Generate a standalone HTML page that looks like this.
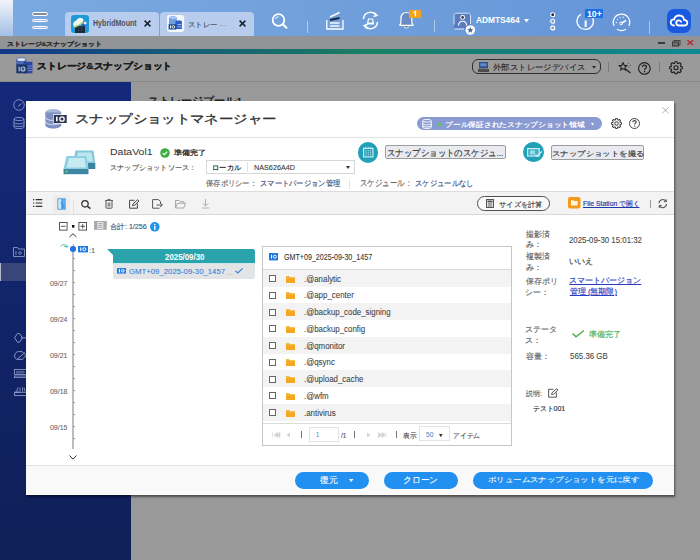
<!DOCTYPE html>
<html><head><meta charset="utf-8">
<style>
*{margin:0;padding:0;box-sizing:border-box}
html,body{width:700px;height:560px;overflow:hidden;background:#999;font-family:"Liberation Sans",sans-serif;color:#333}
.a{position:absolute}
.t{position:absolute;white-space:nowrap;line-height:1;transform-origin:0 0}
svg{position:absolute;overflow:visible}
#topbar{left:0;top:0;width:700px;height:36px;background:linear-gradient(90deg,#7ba9e0,#6a9ad9 72%,#6393d5)}
#leftstrip{left:0;top:0;width:13px;height:36px;background:linear-gradient(#f2f4fa,#a4bfe8)}
#titlebar{left:0;top:36px;width:700px;height:12.5px;background:#929395}
#teal{left:0;top:48.5px;width:700px;height:5.5px;background:linear-gradient(90deg,#12378a 0%,#155c7a 25%,#187468 45%,#188264 53%,#11807c 75%,#0d8a94 100%)}
#apphdr{left:0;top:54px;width:700px;height:28px;background:#9a9a9a}
#sidebar{left:0;top:82px;width:131px;height:478px;background:linear-gradient(#14297a,#0f1f57)}
#content{left:131px;top:82px;width:569px;height:478px;background:#999}
#modal{left:26px;top:101px;width:648px;height:394px;background:#fff;box-shadow:1px 2px 2px rgba(0,0,0,.5)}
.tab{top:12px;height:24px;background:#b8ccee;border-radius:4px 4px 0 0}
.sep{width:1px;background:rgba(255,255,255,.45)}
.hl{height:1px;background:#dedede}
.tbtn{background:#e9ebf0;border:1px solid #9c9c9c;border-radius:2px}
.tc{border-radius:50%;background:#22a0b8}
.row{left:263px;width:248px;height:16.75px}
.cb{width:7px;height:7px;border:1px solid #666;background:#fff}
.btn{top:471.6px;height:17.1px;border-radius:9px;background:#2190f0}
</style></head><body>
<div id="topbar" class="a"></div>
<div id="leftstrip" class="a"></div>
<!-- hamburger -->
<div class="a" style="left:32px;top:12.3px;width:16px;height:3.6px;border-radius:2px;border:1px solid #fff;background:#808a98"></div>
<div class="a" style="left:32px;top:18.9px;width:16px;height:3.6px;border-radius:2px;border:1px solid #fff;background:#a3bce4"></div>
<div class="a" style="left:32px;top:25.5px;width:16px;height:3.6px;border-radius:2px;border:1px solid #fff;background:#a3bce4"></div>
<!-- tabs -->
<div class="a tab" style="left:65px;width:94px"></div>
<div class="a tab" style="left:160px;width:93.5px"></div>
<svg style="left:71px;top:14.5px" width="18" height="18" viewBox="0 0 18 18">
 <rect x="0" y="0" width="18" height="18" rx="3" fill="#1f9ad8"/>
 <rect x="4" y="11" width="10" height="7" fill="#1c2838"/>
 <path d="M5 12.5H13M5 15H13M7.5 11V18M10.5 11V18" stroke="#34465c" stroke-width=".6"/>
 <path d="M11 5 L15.5 8.5 L13.5 12 L10 9.5Z" fill="#2a4fc0"/>
 <path d="M2.5 11.5 C5 11 9 8.5 12 6.5 L11.5 8.8 C9 10.5 6 12 3.5 13Z" fill="#a8e070"/>
 <path d="M2.5 10.5 C1.5 8.5 3 6 5.5 5.5 C6.5 3 9.5 2 11.5 3.5 C13 4.5 12.5 6.5 12 6.8 C9 8.8 5 11 2.5 11.5Z" fill="#f6f9ee"/>
 <circle cx="14" cy="8" r="1.6" fill="#e8f0ff"/>
</svg>
<svg style="left:143.8px;top:20.3px" width="7" height="7" viewBox="0 0 7 7"><path d="M0.6 0.6L6.4 6.4M6.4 0.6L0.6 6.4" stroke="#1b2233" stroke-width="1.5"/></svg>
<svg style="left:166.8px;top:15.2px" width="17.2" height="17" viewBox="0 0 17.2 17">
 <rect x="0" y="0" width="17.2" height="17" rx="3" fill="#f3f7fd"/>
 <path d="M2 3C2 1.8 3.8 1.3 5.9 1.3C8 1.3 9.8 1.8 9.8 3V9.5H2Z" fill="#6f9ee2"/>
 <ellipse cx="5.9" cy="2.8" rx="3.6" ry="1.3" fill="#a9c6f0"/>
 <path d="M8.4 6.5C8.4 5.9 10 5.6 11.6 5.6C13.3 5.6 14.9 5.9 14.9 6.5V14H8.4Z" fill="#2e5cc6"/>
 <path d="M10.5 9.5H14.5M10.5 11.8H14.5" stroke="#cfe0f8" stroke-width=".7"/>
 <rect x="1.6" y="9.2" width="7.6" height="5.3" fill="#164a88"/>
 <rect x="3" y="10.4" width=".9" height="3" fill="#fff"/>
 <circle cx="6.4" cy="11.9" r="1.3" fill="none" stroke="#fff" stroke-width=".9"/>
</svg>
<div class="a" style="left:219.5px;top:25.3px;width:1px;height:1px;background:#8995a8"></div>
<div class="a" style="left:222px;top:25.3px;width:1px;height:1px;background:#8995a8"></div>
<div class="a" style="left:224.5px;top:25.3px;width:1px;height:1px;background:#8995a8"></div>
<svg style="left:238.9px;top:20.3px" width="7" height="7" viewBox="0 0 7 7"><path d="M0.6 0.6L6.4 6.4M6.4 0.6L0.6 6.4" stroke="#1b2233" stroke-width="1.5"/></svg>
<!-- search -->
<svg style="left:271px;top:13px" width="18" height="16" viewBox="0 0 18 16">
 <circle cx="7.5" cy="7" r="5.8" fill="none" stroke="#fff" stroke-width="1.8"/>
 <path d="M4.5 6 A3.2 3.2 0 0 1 7.5 3.8" fill="none" stroke="#fff" stroke-width="1"/>
 <path d="M12 11.5 L15.5 14.8" stroke="#fff" stroke-width="2" stroke-linecap="round"/>
</svg>
<div class="a sep" style="left:307px;top:20.6px;height:12.8px"></div>
<!-- storage stack -->
<svg style="left:326px;top:11px" width="18" height="19" viewBox="0 0 18 19">
 <path d="M0.8 9 V18 H17 V9" fill="none" stroke="#fff" stroke-width="1.3"/>
 <path d="M4 6 L13.5 1.5" stroke="#fff" stroke-width="1.4"/>
 <path d="M4 9 L13.5 7" stroke="#1a2740" stroke-width="2.2"/>
 <path d="M4 12 H13.5" stroke="#fff" stroke-width="1.4"/>
 <path d="M4 15 H13.5" stroke="#fff" stroke-width="1.4"/>
</svg>
<!-- sync -->
<svg style="left:361px;top:10.5px" width="19" height="19" viewBox="0 0 19 19">
 <path d="M2.5 8 A7 7 0 0 1 15 4" fill="none" stroke="#fff" stroke-width="1.5"/>
 <path d="M16.5 11 A7 7 0 0 1 4 15" fill="none" stroke="#fff" stroke-width="1.5"/>
 <path d="M13 1.5 L16 4.5 L12.5 5.5" fill="none" stroke="#fff" stroke-width="1.4"/>
 <path d="M6 17.5 L3 14.5 L6.5 13.5" fill="none" stroke="#fff" stroke-width="1.4"/>
 <path d="M6.5 12.5 L7.5 8 H11.5 L12.5 12.5 Z" fill="none" stroke="#fff" stroke-width="1.2"/>
 <rect x="6" y="11.5" width="7" height="2" fill="#fff"/>
</svg>
<!-- bell -->
<svg style="left:399px;top:12px" width="16" height="18" viewBox="0 0 16 18">
 <path d="M.7 13.3C1.7 12.4 2 11.5 2 9V6.2C2 2.7 4.3 .5 7.4 .5C10.5 .5 12.8 2.7 12.8 6.2V9C12.8 11.5 13.1 12.4 14.1 13.3Z" fill="#6a8cc4" stroke="#fff" stroke-width="1.2" stroke-linejoin="round"/>
 <path d="M5 14.4A2.4 2.1 0 0 0 9.8 14.4Z" fill="#fff"/>
 <rect x="6.2" y="14.4" width="2.4" height="1" fill="#2a3548"/>
</svg>
<div class="a" style="left:409.3px;top:9.9px;width:11.5px;height:8.2px;background:#f5a31c;border-radius:1px"></div>
<svg style="left:413px;top:11.3px" width="4" height="6" viewBox="0 0 4 6"><path d="M.6 1.6L2.4 .4V5.6" fill="none" stroke="#fff" stroke-width="1.3"/></svg>
<div class="a sep" style="left:434px;top:20.4px;height:11.6px"></div>
<!-- user -->
<svg style="left:452.5px;top:11.5px" width="23" height="23" viewBox="0 0 23 23">
 <rect x="1" y="1.3" width="16.5" height="15.5" fill="#5a7dbf"/>
 <path d="M1 12.5V3.2C1 2 1.8 1.2 3 1.2H15.5C16.7 1.2 17.5 2 17.5 3.2V12" fill="none" stroke="#d3e2f7" stroke-width="1"/>
 <path d="M1.5 17H11" stroke="#d3e2f7" stroke-width="1.1"/>
 <circle cx="9.6" cy="5.4" r="1.9" fill="#2a3550" stroke="#fff" stroke-width="1.1"/>
 <path d="M5.6 13.5C5.6 10.5 7.3 9.2 9.6 9.2C11.9 9.2 13.6 10.5 13.6 13.5" fill="none" stroke="#fff" stroke-width="1.1"/>
 <circle cx="17.3" cy="18" r="4.8" fill="#fff"/>
 <path d="M17.3 14.9L18.2 17.1L20.5 17.2L18.7 18.6L19.3 20.9L17.3 19.6L15.3 20.9L15.9 18.6L14.1 17.2L16.4 17.1Z" fill="#4a6a9a"/>
</svg>
<svg style="left:523.5px;top:19px" width="5" height="3.5" viewBox="0 0 5 3.5"><path d="M0 0H5L2.5 3.5Z" fill="#fff"/></svg>
<!-- dots -->
<svg style="left:549.5px;top:11.5px" width="6" height="19" viewBox="0 0 6 19">
 <circle cx="2.7" cy="2.8" r="2" fill="#1b2740" stroke="#fff" stroke-width="1.1"/>
 <circle cx="2.7" cy="9.2" r="2" fill="#7aa0d8" stroke="#fff" stroke-width="1.1"/>
 <circle cx="2.7" cy="15.9" r="2" fill="#7aa0d8" stroke="#fff" stroke-width="1.1"/>
</svg>
<!-- info -->
<svg style="left:575.5px;top:11.5px" width="19" height="19" viewBox="0 0 19 19">
 <path d="M13 2 A8.2 8.2 0 1 1 5 2.2" fill="none" stroke="#fff" stroke-width="1.3"/>
 <rect x="8.7" y="8.5" width="1.9" height="6.5" fill="#fff"/>
</svg>
<div class="a" style="left:585.4px;top:9.3px;width:17.5px;height:8.6px;background:#1a70e6"></div>
<!-- gauge -->
<svg style="left:611.5px;top:12.5px" width="19" height="18" viewBox="0 0 19 18">
 <path d="M2.2 13 A8.2 8.2 0 1 1 16.8 13" fill="none" stroke="#fff" stroke-width="1.2"/>
 <path d="M5 16.3 A9 9 0 0 0 14 16.3" fill="none" stroke="#fff" stroke-width="1.2"/>
 <path d="M9.5 10.2 L14 7.5" stroke="#fff" stroke-width="1.5"/>
 <circle cx="9.2" cy="10.4" r="1.4" fill="none" stroke="#fff" stroke-width="1"/>
 <circle cx="4.3" cy="9.5" r=".65" fill="#fff"/><circle cx="5.5" cy="6.3" r=".65" fill="#fff"/><circle cx="8" cy="4.3" r=".65" fill="#fff"/><circle cx="11.2" cy="4.2" r=".65" fill="#fff"/>
</svg>
<div class="a sep" style="left:648.6px;top:20.7px;height:13.6px"></div>
<!-- cloud app -->
<svg style="left:667px;top:9px" width="24" height="24" viewBox="0 0 24 24">
 <rect x="0" y="0" width="24" height="24" rx="7" fill="#1959df"/>
 <path d="M7 16.5 C4.5 16.5 3.5 14.5 3.8 12.8 C4.2 11 5.8 10.2 7.2 10.4 C7.8 7.8 10 6.3 12.5 6.5 C15 6.7 16.8 8.5 17 10.8 C19 10.8 20.5 12.3 20.3 14 C20.2 15.5 19 16.5 17.5 16.5 H12 C10.3 16.5 9.2 15.2 9.2 13.8 C9.2 12.4 10.3 11.3 11.8 11.3 C13 11.3 13.8 12 14.2 12.8" fill="none" stroke="#fff" stroke-width="1.8" stroke-linecap="round"/>
</svg>

<div id="titlebar" class="a"></div>
<!-- window controls -->
<div class="a" style="left:658px;top:42px;width:7px;height:1.6px;background:#3a3a3a"></div>
<svg style="left:672px;top:39.5px" width="8.5" height="6.5" viewBox="0 0 8.5 6.5"><rect x="2" y=".5" width="6" height="4.5" fill="none" stroke="#444" stroke-width="1"/><rect x=".5" y="2" width="6" height="4" fill="#6e6e6e" stroke="#3a3a3a" stroke-width="1"/></svg>
<svg style="left:687.4px;top:40.4px" width="6.4" height="5.4" viewBox="0 0 6.4 5.4"><path d="M.4 .3L6 5.1M6 .3L.4 5.1" stroke="#b8282a" stroke-width="1.3"/></svg>
<div id="teal" class="a"></div>
<div id="apphdr" class="a"></div>
<!-- app header icon -->
<svg style="left:16.4px;top:57.2px" width="17" height="17" viewBox="0 0 17 17">
 <path d="M.3 2.5C.3 1 2.5 .2 5.3 .2C8.1 .2 10.3 1 10.3 2.5V8H.3Z" fill="#3352a8"/>
 <ellipse cx="5.3" cy="2.4" rx="4.6" ry="1.9" fill="#9fb0dc"/>
 <ellipse cx="5.3" cy="2.8" rx="3.4" ry="1.2" fill="#dfe6f5"/>
 <path d="M.3 5.3C2 6.3 8 6.3 10.3 5.3" fill="none" stroke="#8ea2d6" stroke-width=".6"/>
 <path d="M7.5 4.8H16.4V16.3H7.5Z" fill="#2c45a0"/>
 <path d="M11 9H16M11 11.3H16M11 13.6H16" stroke="#8da0d8" stroke-width=".7"/>
 <rect x=".3" y="7.5" width="11" height="8.8" fill="#1c3767"/>
 <rect x="2.6" y="9.6" width="1.1" height="4.8" fill="#b9c6e2"/>
 <circle cx="7" cy="12" r="2" fill="none" stroke="#b9c6e2" stroke-width="1.1"/>
 <circle cx="7" cy="12" r=".6" fill="#b9c6e2"/>
</svg>
<!-- app header right -->
<div class="a" style="left:471.5px;top:59.1px;width:129.9px;height:15.1px;border:1px solid #2e2e2e;border-radius:6px"></div>
<svg style="left:477.9px;top:61.7px" width="11" height="10" viewBox="0 0 11 10">
 <rect x="1" y="0" width="9" height="6" fill="#2f4f8a"/>
 <rect x="2.3" y="1.3" width="6.4" height="3" fill="#5f86c8"/>
 <path d="M0 7H11V10H0Z" fill="#4a4a4a"/>
 <rect x="1" y="6" width="9" height="1.2" fill="#7a7a7a"/>
</svg>
<svg style="left:592.3px;top:66px" width="4" height="2.6" viewBox="0 0 4 2.6"><path d="M0 0H4L2 2.6Z" fill="#222"/></svg>
<div class="a" style="left:608.3px;top:61.7px;width:1px;height:10.3px;background:#7a7a7a"></div>
<svg style="left:618.6px;top:61.7px" width="13" height="11.5" viewBox="0 0 13 11.5">
 <path d="M4 .8L5.2 3.3L7.8 3.6L5.9 5.3L6.4 7.9L4 6.6L1.7 7.9L2.2 5.3L.3 3.6L2.9 3.3Z" fill="none" stroke="#1e1e1e" stroke-width="1.1"/>
 <path d="M6.5 7L11.5 11" stroke="#1e1e1e" stroke-width="1.3"/>
 <path d="M9 1.5H10M10.8 3.5H11.8M9.5 5.2H10.3" stroke="#444" stroke-width=".8"/>
</svg>
<svg style="left:637.5px;top:61.5px" width="13" height="13" viewBox="0 0 13 13">
 <circle cx="6.4" cy="6.4" r="5.8" fill="none" stroke="#1e1e1e" stroke-width="1.1"/>
 <path d="M4.4 5C4.4 3.8 5.3 3.1 6.4 3.1C7.6 3.1 8.4 3.8 8.4 4.9C8.4 6.2 6.6 6.4 6.6 7.9" fill="none" stroke="#1e1e1e" stroke-width="1.2"/>
 <circle cx="6.6" cy="9.6" r=".8" fill="#1e1e1e"/>
</svg>
<div class="a" style="left:659.2px;top:61.7px;width:1px;height:10.3px;background:#7a7a7a"></div>
<svg style="left:669.2px;top:60.9px" width="14" height="13.5" viewBox="0 0 11 11" preserveAspectRatio="none">
 <path d="M9.13 4.38 L10.43 4.68 L10.43 6.32 L9.13 6.62 L8.86 7.28 L9.57 8.41 L8.41 9.57 L7.28 8.86 L6.62 9.13 L6.32 10.43 L4.68 10.43 L4.38 9.13 L3.72 8.86 L2.59 9.57 L1.43 8.41 L2.14 7.28 L1.87 6.62 L0.57 6.32 L0.57 4.68 L1.87 4.38 L2.14 3.72 L1.43 2.59 L2.59 1.43 L3.72 2.14 L4.38 1.87 L4.68 0.57 L6.32 0.57 L6.62 1.87 L7.28 2.14 L8.41 1.43 L9.57 2.59 L8.86 3.72Z" stroke-linejoin="round" fill="none" stroke="#1e1e1e" stroke-width=".9"/>
 <circle cx="5.5" cy="5.5" r="1.6" fill="none" stroke="#1e1e1e" stroke-width=".9"/>
</svg>
<div class="a" style="left:0;top:81.2px;width:700px;height:1px;background:#8a8a8a"></div>
<div id="sidebar" class="a"></div>
<!-- sidebar icons -->
<svg style="left:12.5px;top:98.5px" width="12" height="12" viewBox="0 0 12 12">
 <circle cx="6" cy="6" r="5.3" fill="none" stroke="#8a96c6" stroke-width=".9"/>
 <path d="M5 7.5L8.5 4.5" stroke="#8a96c6" stroke-width="1"/>
</svg>
<svg style="left:12.5px;top:116.5px" width="12" height="12" viewBox="0 0 12 12">
 <ellipse cx="6" cy="2" rx="5" ry="1.6" fill="none" stroke="#8a96c6" stroke-width=".9"/>
 <path d="M1 2V10C1 11 3 11.6 6 11.6C9 11.6 11 11 11 10V2M1 5.3C1 6.3 3 6.9 6 6.9C9 6.9 11 6.3 11 5.3M1 8C1 9 3 9.6 6 9.6C9 9.6 11 9 11 8" fill="none" stroke="#8a96c6" stroke-width=".9"/>
</svg>
<svg style="left:12.5px;top:246.5px" width="12" height="10" viewBox="0 0 12 10">
 <path d="M.5 9.5V.5H4.5L5.5 2H11.5V9.5Z" fill="none" stroke="#8a96c6" stroke-width=".9"/>
 <rect x="2.5" y="4" width=".9" height="4" fill="#8a96c6"/><circle cx="7" cy="6" r="1.3" fill="none" stroke="#8a96c6" stroke-width=".8"/>
</svg>
<div class="a" style="left:0;top:262.9px;width:131px;height:17.7px;background:#3a4579"></div>
<div class="a" style="left:0;top:262.9px;width:1.2px;height:17.7px;background:#b4b9d2"></div>
<svg style="left:13.8px;top:333.1px" width="13" height="10" viewBox="0 0 13 10">
 <path d="M5.5 .5H3.5L.6 4.8L3.5 9.2H5.5" fill="none" stroke="#8a96c6" stroke-width="1"/>
 <path d="M5.5 .5L8.5 4.8L5.5 9.2M7 4.8H13" fill="none" stroke="#8a96c6" stroke-width="1"/>
</svg>
<svg style="left:13.8px;top:351px" width="13" height="9" viewBox="0 0 13 9">
 <path d="M8 .6H4.5C2 .6 .6 3 .6 5C.6 7 2 8.4 3.5 8.4H8.5L12 4.5Z" fill="none" stroke="#8a96c6" stroke-width="1"/>
 <path d="M3 8.4L11 1.5" stroke="#8a96c6" stroke-width="1"/>
</svg>
<svg style="left:13.8px;top:368.9px" width="13" height="9" viewBox="0 0 13 9">
 <rect x=".5" y=".5" width="12" height="5" fill="none" stroke="#8a96c6" stroke-width=".9"/>
 <path d="M2.5 2.3H4.5V3.2H2.5V4.1H4.5M5.5 2.3H7.5V3.2H5.5V4.1H7.5M8.5 2.3V4.1H10C10.5 4.1 10.5 2.3 10 2.3Z" fill="none" stroke="#8a96c6" stroke-width=".6"/>
 <rect x=".5" y="7" width="12" height="1.6" fill="none" stroke="#8a96c6" stroke-width=".8"/>
</svg>
<svg style="left:13.8px;top:386.5px" width="13" height="9" viewBox="0 0 13 9">
 <path d="M2.5 4.5L4 .5M6 .5V4.5M8.5 .5V4.5M11 4.5L10 .5" fill="none" stroke="#8a96c6" stroke-width=".9"/>
 <rect x=".5" y="5.3" width="12" height="3.2" fill="none" stroke="#8a96c6" stroke-width=".9"/>
 <path d="M.5 5.3H5.5" stroke="#8a96c6" stroke-width="1.4"/>
</svg>
<div id="content" class="a"></div>
<div class="t" style="left:147.65px;top:96.10px;font-size:9.76px;font-weight:700;color:#202020;transform:scaleX(1.103);">ストレージプール1</div>
<div id="modal" class="a"></div>

<!-- ======= MODAL ======= -->
<!-- header icon -->
<svg style="left:45px;top:109px" width="23" height="20" viewBox="0 0 23 20">
 <ellipse cx="8.3" cy="3.5" rx="8" ry="3.5" fill="#a9b7d8"/>
 <path d="M.3 3.5V16C.3 18 4 19.6 8.3 19.6C12.6 19.6 16.3 18 16.3 16V3.5" fill="#7f8fbf"/>
 <path d="M.3 8C.3 10 4 11.4 8.3 11.4C12.6 11.4 16.3 10 16.3 8M.3 12.3C.3 14.3 4 15.7 8.3 15.7C12.6 15.7 16.3 14.3 16.3 12.3" fill="none" stroke="#c9d2ea" stroke-width="1.1"/>
 <rect x="8" y="5.3" width="14.5" height="9.3" fill="#fff"/>
 <rect x="8.7" y="6" width="13" height="8" fill="#2a3550"/>
 <rect x="11" y="7.7" width="1.6" height="4.6" fill="#fff"/>
 <circle cx="17" cy="10" r="2.2" fill="none" stroke="#fff" stroke-width="1.3"/>
</svg>
<!-- pill -->
<div class="a" style="left:416.8px;top:116.8px;width:185.5px;height:13.7px;border-radius:7px;background:#8a9ad2"></div>
<svg style="left:422px;top:118.8px" width="10" height="10" viewBox="0 0 10 10">
 <ellipse cx="5" cy="1.8" rx="4.3" ry="1.4" fill="none" stroke="#fff" stroke-width=".9"/>
 <path d="M.7 1.8V8.2C.7 9 2.7 9.6 5 9.6C7.3 9.6 9.3 9 9.3 8.2V1.8M.7 4.5C.7 5.3 2.7 5.9 5 5.9C7.3 5.9 9.3 5.3 9.3 4.5M.7 6.7C.7 7.5 2.7 8 5 8C7.3 8 9.3 7.5 9.3 6.7" fill="none" stroke="#fff" stroke-width=".9"/>
</svg>
<div class="a" style="left:437.3px;top:122.5px;width:3.6px;height:3.6px;border-radius:50%;background:#58c858"></div>
<svg style="left:591.3px;top:122.7px" width="3" height="2.6" viewBox="0 0 3 2.6"><path d="M0 0H3L1.5 2.6Z" fill="#fff"/></svg>
<!-- gear -->
<svg style="left:611px;top:117.8px" width="11" height="11" viewBox="0 0 11 11">
 <path d="M9.13 4.38 L10.43 4.68 L10.43 6.32 L9.13 6.62 L8.86 7.28 L9.57 8.41 L8.41 9.57 L7.28 8.86 L6.62 9.13 L6.32 10.43 L4.68 10.43 L4.38 9.13 L3.72 8.86 L2.59 9.57 L1.43 8.41 L2.14 7.28 L1.87 6.62 L0.57 6.32 L0.57 4.68 L1.87 4.38 L2.14 3.72 L1.43 2.59 L2.59 1.43 L3.72 2.14 L4.38 1.87 L4.68 0.57 L6.32 0.57 L6.62 1.87 L7.28 2.14 L8.41 1.43 L9.57 2.59 L8.86 3.72Z" stroke-linejoin="round" fill="none" stroke="#444" stroke-width="1.05"/>
 <circle cx="5.5" cy="5.5" r="1.7" fill="none" stroke="#444" stroke-width="1.05"/>
</svg>
<svg style="left:629px;top:117.8px" width="11" height="11" viewBox="0 0 11 11">
 <circle cx="5.5" cy="5.5" r="5" fill="none" stroke="#444" stroke-width="1"/>
 <path d="M3.8 4.2C3.8 3.2 4.6 2.6 5.5 2.6C6.5 2.6 7.2 3.2 7.2 4.1C7.2 5.2 5.6 5.4 5.6 6.6" fill="none" stroke="#444" stroke-width="1.1"/>
 <circle cx="5.6" cy="8.1" r=".7" fill="#444"/>
</svg>
<svg style="left:661.6px;top:107.3px" width="7" height="6.5" viewBox="0 0 7 6.5"><path d="M.3 .3L6.7 6.2M6.7 .3L.3 6.2" stroke="#9a9a9a" stroke-width=".8"/></svg>
<div class="a hl" style="left:26px;top:136.8px;width:648px;background:#e3e3e3"></div>
<!-- volume icon -->
<svg style="left:62.5px;top:150px" width="33" height="25" viewBox="0 0 33 25">
 <path d="M12.5 .5H30.5L32.3 13H9.8Z" fill="#84c8da"/>
 <path d="M15 2.5H28.5L30 11.5H12.5Z" fill="#bde5ee"/>
 <rect x="25" y="13" width="7.3" height="6" fill="#3a84a0"/>
 <path d="M3.5 6H23.5L25.5 19H.5Z" fill="#8ccfe0"/>
 <path d="M6 8H21.5L23 17.5H3.5Z" fill="#c6ebf2"/>
 <rect x=".5" y="19" width="25" height="5.2" fill="#3f86a2"/>
 <circle cx="3.6" cy="21.6" r="1" fill="#8fd860"/>
</svg>
<!-- green check -->
<svg style="left:159.7px;top:147.5px" width="10" height="10" viewBox="0 0 10 10">
 <circle cx="5" cy="5" r="4.8" fill="#3fae49"/>
 <path d="M2.7 5.1L4.3 6.6L7.3 3.6" fill="none" stroke="#fff" stroke-width="1.2"/>
</svg>
<!-- select -->
<div class="a" style="left:205.7px;top:159.6px;width:149.3px;height:14.6px;border:1px solid #d6d6d6;background:#fff"></div>
<div class="a" style="left:247px;top:162.4px;width:1px;height:9.6px;background:#e2e2e2"></div>
<svg style="left:346px;top:165.8px" width="4" height="3" viewBox="0 0 4 3"><path d="M0 0H4L2 3Z" fill="#333"/></svg>
<div class="a" style="left:349.3px;top:180px;width:1px;height:9px;background:#e2e2e2"></div>
<!-- teal circles -->
<div class="a tc" style="left:357.5px;top:142px;width:20.5px;height:20.5px"></div>
<svg style="left:362.8px;top:146.8px" width="10.5" height="10.5" viewBox="0 0 10.5 10.5">
 <rect x=".6" y="1.3" width="9.3" height="8.6" fill="none" stroke="#d8f4f8" stroke-width="1.1"/>
 <path d="M2.6 .2V1.8M5.25 .2V1.8M7.9 .2V1.8" stroke="#d8f4f8" stroke-width=".9"/>
 <path d="M2.5 3.8H3.5M4.75 3.8H5.75M7 3.8H8M2.5 5.8H3.5M4.75 5.8H5.75M7 5.8H8M2.5 7.8H3.5M4.75 7.8H5.75M7 7.8H8" stroke="#d8f4f8" stroke-width="1"/>
</svg>
<div class="a tbtn" style="left:385.2px;top:144.6px;width:120.6px;height:14.7px"></div>
<div class="a tc" style="left:523.2px;top:141.8px;width:20.6px;height:20.6px"></div>
<svg style="left:527px;top:147.8px" width="16" height="9" viewBox="0 0 16 9">
 <rect x=".6" y=".6" width="11.6" height="7.4" fill="#3fb3c8" stroke="#d8f4f8" stroke-width="1.1"/>
 <rect x="3" y="2.5" width="5" height="3.8" fill="#9adbe6"/>
 <path d="M8.5 6.5L10.3 8.2L15 3.3" fill="none" stroke="#d8f4f8" stroke-width="1.1"/>
</svg>
<div class="a tbtn" style="left:551px;top:144.5px;width:93.3px;height:15px"></div>
<div class="a hl" style="left:26px;top:190.8px;width:648px;background:#dcdcdc"></div>
<!-- toolbar -->
<div class="a" style="left:26px;top:191.8px;width:648px;height:22px;background:#f3f3f3"></div>
<div class="a hl" style="left:26px;top:213.7px;width:648px;background:#d9d9d9"></div>
<svg style="left:32.9px;top:199.4px" width="9.5" height="8" viewBox="0 0 9.5 8">
 <path d="M0 .7H1.3M0 4H1.3M0 7.3H1.3M2.7 .7H9.3M2.7 4H9.3M2.7 7.3H9.3" stroke="#333" stroke-width="1.2"/>
</svg>
<div class="a" style="left:53px;top:195px;width:17px;height:17.6px;background:#efece9"></div>
<svg style="left:57px;top:198px" width="9" height="12" viewBox="0 0 9 12">
 <rect x=".3" y=".3" width="8.4" height="11.4" fill="#4aa0ea"/>
 <rect x="1.2" y="1.2" width="3.6" height="9.6" fill="#c6eafb"/>
 <rect x="5.3" y="1.2" width="2.6" height="9.6" fill="#5fb4f2"/>
 <path d="M4.9 1V11M3.3 5H4.9M4.9 6.8H7.5M4.9 8.8H7.5" stroke="#2f78c8" stroke-width=".7"/>
</svg>
<div class="a" style="left:73.4px;top:200px;width:1px;height:14px;background:#e2e2e2"></div>
<svg style="left:80.9px;top:200px" width="11" height="9" viewBox="0 0 11 9">
 <circle cx="4" cy="3.8" r="3.2" fill="none" stroke="#333" stroke-width="1.3"/>
 <path d="M6.3 6.1L9.4 8.6" stroke="#333" stroke-width="1.5"/>
</svg>
<svg style="left:105.4px;top:199px" width="8" height="9.5" viewBox="0 0 8 9.5">
 <path d="M0 1.5H8M2.8 1.5V.4H5.2V1.5" fill="none" stroke="#555" stroke-width=".9"/>
 <path d="M1 2V8.6C1 9 1.3 9.2 1.6 9.2H6.4C6.7 9.2 7 9 7 8.6V2" fill="none" stroke="#555" stroke-width="1"/>
 <path d="M3.2 3.5V7.6M4.8 3.5V7.6" stroke="#555" stroke-width=".9"/>
</svg>
<svg style="left:128.6px;top:199px" width="10.5" height="9.8" viewBox="0 0 10.5 9.8">
 <path d="M5.5 1.3H.6V9.2H8.4V4.5" fill="none" stroke="#444" stroke-width="1"/>
 <path d="M3.5 6.5L4 4.8L8.7.7L10 2L5.7 6.2Z" fill="none" stroke="#444" stroke-width="1"/>
</svg>
<svg style="left:151.7px;top:199px" width="11.5" height="9.8" viewBox="0 0 11.5 9.8">
 <path d="M6.5 .6H.6V9.2H7.5M6.5 .6L8.5 2.6V4" fill="none" stroke="#555" stroke-width="1"/>
 <path d="M4.5 6H10M8 4L10.5 6L8 8" fill="none" stroke="#555" stroke-width="1"/>
</svg>
<svg style="left:175.2px;top:199.5px" width="11" height="8.5" viewBox="0 0 11 8.5">
 <path d="M.5 8V.5H4L5 1.7H9V3M.5 8L2.3 3.3H10.5L8.7 8Z" fill="none" stroke="#a8a8a8" stroke-width="1"/>
</svg>
<svg style="left:201.5px;top:199px" width="7" height="9.5" viewBox="0 0 7 9.5">
 <path d="M3.5 0V7M.8 4.3L3.5 7L6.2 4.3M0 9H7" fill="none" stroke="#b0b0b0" stroke-width="1"/>
</svg>
<!-- pill size btn -->
<div class="a" style="left:477.1px;top:196.2px;width:72.6px;height:15px;border:1px solid #505050;border-radius:8px;background:#fafafa"></div>
<svg style="left:486px;top:199.3px" width="8" height="9" viewBox="0 0 8 9">
 <rect x=".5" y=".5" width="7" height="8" fill="none" stroke="#555" stroke-width="1"/>
 <rect x="1.5" y="1.5" width="5" height="2" fill="#555"/>
 <path d="M1.5 5H6.5M1.5 7H6.5M3 4V8M5 4V8" stroke="#555" stroke-width=".6"/>
</svg>
<svg style="left:567.7px;top:196.9px" width="12.5" height="11.6" viewBox="0 0 12.5 11.6">
 <rect x="0" y="0" width="12.5" height="11.6" rx="2" fill="#f29a1c"/>
 <path d="M3 3.2H5.5L6.3 4H9.5V8.6H3Z" fill="#fff4d8"/>
</svg>
<div class="a" style="left:649.5px;top:200.3px;width:1px;height:7.7px;background:#999"></div>
<svg style="left:657.8px;top:199.4px" width="9.5" height="9.2" viewBox="0 0 9.5 9.2">
 <path d="M1 4.2A3.8 3.8 0 0 1 8 2.3M8.5 5A3.8 3.8 0 0 1 1.5 6.9" fill="none" stroke="#555" stroke-width="1.1"/>
 <path d="M8.3 .3V2.7H5.9M1.2 8.9V6.5H3.6" fill="none" stroke="#555" stroke-width="1"/>
</svg>
<!-- timeline controls -->
<svg style="left:59px;top:222px" width="29" height="9" viewBox="0 0 29 9">
 <rect x=".5" y=".5" width="7.6" height="7.6" fill="#fff" stroke="#444" stroke-width=".9"/>
 <path d="M2 4.3H6.6" stroke="#444" stroke-width=".9"/>
 <rect x="13" y="3" width="2.4" height="2.6" fill="#111"/>
 <rect x="19.9" y=".5" width="7.6" height="7.6" fill="#fff" stroke="#444" stroke-width=".9"/>
 <path d="M21.4 4.3H26M23.7 2V6.6" stroke="#444" stroke-width=".9"/>
</svg>
<svg style="left:94.1px;top:221.2px" width="12.8" height="8.8" viewBox="0 0 12.8 8.8">
 <rect x="0" y="0" width="12.8" height="8.8" fill="#ababab"/>
 <rect x="4" y="1.5" width="4.8" height="6" fill="none" stroke="#f0f0f0" stroke-width=".9"/>
 <path d="M4 3.5H8.8M4 5.5H8.8" stroke="#f0f0f0" stroke-width=".7"/>
</svg>
<svg style="left:149.5px;top:221.8px" width="9.6" height="9.6" viewBox="0 0 9.6 9.6">
 <circle cx="4.8" cy="4.8" r="4.8" fill="#1f95ea"/>
 <rect x="4.1" y="4" width="1.4" height="3.8" fill="#fff"/><circle cx="4.8" cy="2.6" r=".8" fill="#fff"/>
</svg>
<svg style="left:69px;top:233px" width="8" height="4.5" viewBox="0 0 8 4.5"><path d="M.5 4L4 .7L7.5 4" fill="none" stroke="#333" stroke-width="1"/></svg>
<svg style="left:59.7px;top:244px" width="8" height="5" viewBox="0 0 8 5">
 <path d="M1 2.5C1 1 2.5 .5 4 .8C5.5 .5 7 1.3 7 2.5M4 2.5H8M6.3 1L7.8 2.5L6.3 4" fill="none" stroke="#62c6b4" stroke-width="1"/>
</svg>
<div class="a" style="left:72.3px;top:251px;width:1.4px;height:197.8px;background:#bcbcbc"></div>
<div class="a" style="left:72.5px;top:244px;width:.8px;height:2.5px;background:#8fb0e8"></div>
<div class="a" style="left:70.1px;top:246.3px;width:5.5px;height:5.5px;border-radius:50%;background:#2571e0"></div>
<svg style="left:72px;top:258px" width="4" height="184" viewBox="0 0 4 184">
 <path d="M1 .5H3M1 12.5H3M1 24.5H3M1 36.5H3M1 48.5H3M1 60.5H3M1 72.5H3M1 84.5H3M1 96.5H3M1 108.5H3M1 120.5H3M1 132.5H3M1 144.5H3M1 156.5H3M1 168.5H3M1 180.5H3" stroke="#9a9a9a" stroke-width="1"/>
</svg>
<svg style="left:78px;top:245.7px" width="10" height="6.4" viewBox="0 0 10 6.4">
 <rect x="0" y="0" width="10" height="6.4" fill="#1e7be0"/>
 <rect x="2.2" y="1.4" width="1.1" height="3.6" fill="#fff"/><circle cx="6.3" cy="3.2" r="1.5" fill="none" stroke="#fff" stroke-width="1"/>
</svg>
<svg style="left:69px;top:454.7px" width="8" height="4.8" viewBox="0 0 8 4.8"><path d="M.5 .5L4 4.2L7.5 .5" fill="none" stroke="#333" stroke-width="1"/></svg>
<!-- snapshot card -->
<svg style="left:107.3px;top:249.2px" width="148" height="14.3" viewBox="0 0 148 14.3">
 <path d="M0 0H146C147 0 148 1 148 2V14.3H6V6Z" fill="#2ba3ad"/>
</svg>
<div class="a" style="left:113.3px;top:263.5px;width:142px;height:15.8px;background:#e3e4e6;border-radius:0 0 2px 2px"></div>
<svg style="left:117px;top:268.4px" width="9" height="5.6" viewBox="0 0 9 5.6">
 <rect x="0" y="0" width="9" height="5.6" fill="#2a7fe0"/>
 <rect x="2" y="1.2" width="1" height="3.2" fill="#fff"/><circle cx="5.8" cy="2.8" r="1.3" fill="none" stroke="#fff" stroke-width=".9"/>
</svg>
<svg style="left:235px;top:268.4px" width="8" height="5.5" viewBox="0 0 8 5.5"><path d="M.4 2.8L2.8 5L7.6 .4" fill="none" stroke="#3b7dd8" stroke-width="1.1"/></svg>
<!-- file panel -->
<div class="a" style="left:262px;top:245.6px;width:250px;height:200.8px;border:1px solid #c6c6c6;background:#fff"></div>
<svg style="left:268.6px;top:253px" width="9" height="7.4" viewBox="0 0 9 7.4">
 <rect x="0" y="0" width="9" height="7.4" fill="#1e78e0"/>
 <rect x="2" y="1.8" width="1" height="3.8" fill="#fff"/><circle cx="5.8" cy="3.7" r="1.5" fill="none" stroke="#fff" stroke-width="1"/>
</svg>
<div class="a" style="left:263px;top:269px;width:248px;height:1px;background:#dadada"></div>
<div class="a row" style="top:269.8px;background:#f3f3f3"></div>
<div class="a row" style="top:303.3px;background:#f3f3f3"></div>
<div class="a row" style="top:336.8px;background:#f3f3f3"></div>
<div class="a row" style="top:370.3px;background:#f3f3f3"></div>
<div class="a row" style="top:403.8px;background:#f3f3f3"></div>
<div class="a cb" style="left:269px;top:275.00px"></div>
<svg style="left:286px;top:275.50px" width="9" height="7" viewBox="0 0 9 7"><path d="M0 .3H3.3L4.2 1.2H9V7H0Z" fill="#f5a81f"/><path d="M0 2H9" stroke="#fbc45a" stroke-width=".5"/></svg>
<div class="a cb" style="left:269px;top:291.75px"></div>
<svg style="left:286px;top:292.25px" width="9" height="7" viewBox="0 0 9 7"><path d="M0 .3H3.3L4.2 1.2H9V7H0Z" fill="#f5a81f"/><path d="M0 2H9" stroke="#fbc45a" stroke-width=".5"/></svg>
<div class="a cb" style="left:269px;top:308.50px"></div>
<svg style="left:286px;top:309.00px" width="9" height="7" viewBox="0 0 9 7"><path d="M0 .3H3.3L4.2 1.2H9V7H0Z" fill="#f5a81f"/><path d="M0 2H9" stroke="#fbc45a" stroke-width=".5"/></svg>
<div class="a cb" style="left:269px;top:325.25px"></div>
<svg style="left:286px;top:325.75px" width="9" height="7" viewBox="0 0 9 7"><path d="M0 .3H3.3L4.2 1.2H9V7H0Z" fill="#f5a81f"/><path d="M0 2H9" stroke="#fbc45a" stroke-width=".5"/></svg>
<div class="a cb" style="left:269px;top:342.00px"></div>
<svg style="left:286px;top:342.50px" width="9" height="7" viewBox="0 0 9 7"><path d="M0 .3H3.3L4.2 1.2H9V7H0Z" fill="#f5a81f"/><path d="M0 2H9" stroke="#fbc45a" stroke-width=".5"/></svg>
<div class="a cb" style="left:269px;top:358.75px"></div>
<svg style="left:286px;top:359.25px" width="9" height="7" viewBox="0 0 9 7"><path d="M0 .3H3.3L4.2 1.2H9V7H0Z" fill="#f5a81f"/><path d="M0 2H9" stroke="#fbc45a" stroke-width=".5"/></svg>
<div class="a cb" style="left:269px;top:375.50px"></div>
<svg style="left:286px;top:376.00px" width="9" height="7" viewBox="0 0 9 7"><path d="M0 .3H3.3L4.2 1.2H9V7H0Z" fill="#f5a81f"/><path d="M0 2H9" stroke="#fbc45a" stroke-width=".5"/></svg>
<div class="a cb" style="left:269px;top:392.25px"></div>
<svg style="left:286px;top:392.75px" width="9" height="7" viewBox="0 0 9 7"><path d="M0 .3H3.3L4.2 1.2H9V7H0Z" fill="#f5a81f"/><path d="M0 2H9" stroke="#fbc45a" stroke-width=".5"/></svg>
<div class="a cb" style="left:269px;top:409.00px"></div>
<svg style="left:286px;top:409.50px" width="9" height="7" viewBox="0 0 9 7"><path d="M0 .3H3.3L4.2 1.2H9V7H0Z" fill="#f5a81f"/><path d="M0 2H9" stroke="#fbc45a" stroke-width=".5"/></svg>
<div class="a" style="left:263px;top:423.3px;width:248px;height:1px;background:#dadada"></div>
<!-- pagination -->
<svg style="left:271.5px;top:432px" width="115" height="6" viewBox="0 0 115 6">
 <path d="M.5 .5V5.5M5.5 .5L2 3L5.5 5.5ZM8 .5L4.5 3L8 5.5Z" fill="#d4d4d4" stroke="#d4d4d4" stroke-width=".6"/>
 <path d="M18 .5L14.5 3L18 5.5Z" fill="#d4d4d4"/>
 <path d="M95 .5L98.5 3L95 5.5Z" fill="#d4d4d4"/>
 <path d="M106.5 .5L110 3L106.5 5.5ZM110 .5L113.5 3L110 5.5ZM113.8 .5V5.5" fill="#d4d4d4" stroke="#d4d4d4" stroke-width=".6"/>
</svg>
<div class="a" style="left:301.3px;top:431px;width:1px;height:7px;background:#777"></div>
<div class="a" style="left:309.4px;top:426.6px;width:30px;height:15px;border:1px solid #e3e3e3;background:#fff"></div>
<div class="a" style="left:354.4px;top:431px;width:1px;height:7px;background:#777"></div>
<div class="a" style="left:395.6px;top:431px;width:1px;height:7px;background:#777"></div>
<div class="a" style="left:419.4px;top:426.3px;width:30.2px;height:15.1px;border:1px solid #e3e3e3;background:#fff"></div>
<svg style="left:439.3px;top:433.6px" width="3.6" height="3.3" viewBox="0 0 3.6 3.3"><path d="M0 0H3.6L1.8 3.3Z" fill="#333"/></svg>
<!-- detail icons -->
<svg style="left:572px;top:330px" width="12.5" height="7.5" viewBox="0 0 12.5 7.5"><path d="M.6 3.5L4 6.8L12 .5" fill="none" stroke="#4caf50" stroke-width="1.4"/></svg>
<svg style="left:548px;top:388px" width="10.5" height="9.8" viewBox="0 0 10.5 9.8">
 <path d="M5.5 1.3H.6V9.2H8.4V4.5" fill="none" stroke="#555" stroke-width="1"/>
 <path d="M3.5 6.5L4 4.8L8.7.7L10 2L5.7 6.2Z" fill="none" stroke="#555" stroke-width="1"/>
</svg>
<!-- footer -->
<div class="a" style="left:26px;top:465.2px;width:648px;height:28.5px;background:#f9f9fa;border-top:1px solid #e2e2e2"></div>
<div class="a btn" style="left:294.6px;width:74.3px"></div>
<svg style="left:349.3px;top:479.4px" width="4.4" height="3" viewBox="0 0 4.4 3"><path d="M0 0H4.4L2.2 3Z" fill="#fff"/></svg>
<div class="a btn" style="left:383.6px;width:74.3px"></div>
<div class="a btn" style="left:472.9px;width:180.3px"></div>

<div class="t" style="left:93.26px;top:20.30px;font-size:8.14px;font-weight:700;color:#4a5262;transform:scaleX(0.873);">HybridMount</div>
<div class="t" style="left:188.27px;top:20.70px;font-size:7.06px;font-weight:400;color:#4a5262;transform:scaleX(1.067);-webkit-text-stroke:0.15px #4a5262;">ストレー</div>
<div class="t" style="left:476.16px;top:16.00px;font-size:8.57px;font-weight:700;color:#fff;transform:scaleX(0.973);">ADMTS464</div>
<div class="t" style="left:586.98px;top:9.80px;font-size:8.43px;font-weight:700;color:#fff;transform:scaleX(1.037);">10+</div>
<div class="t" style="left:6.81px;top:41.50px;font-size:5.77px;font-weight:700;color:#2b2b2b;transform:scaleX(1.152);-webkit-text-stroke:0.15px #2b2b2b;">ストレージ&amp;スナップショット</div>
<div class="t" style="left:37.35px;top:62.30px;font-size:9.37px;font-weight:700;color:#1c1c1c;transform:scaleX(1.093);-webkit-text-stroke:0.3px #1c1c1c;">ストレージ&amp;スナップショット</div>
<div class="t" style="left:493.30px;top:62.90px;font-size:8.33px;font-weight:400;color:#222;transform:scaleX(1.052);-webkit-text-stroke:0.08px #222;">外部ストレージデバイス</div>
<div class="t" style="left:74.80px;top:112.95px;font-size:12.35px;font-weight:400;color:#333;transform:scaleX(1.198);-webkit-text-stroke:0.35px #333;">スナップショットマネージャー</div>
<div class="t" style="left:444.95px;top:121.55px;font-size:6.79px;font-weight:700;color:#fff;transform:scaleX(1.108);">プール保証されたスナップショット領域</div>
<div class="t" style="left:110.20px;top:147.25px;font-size:9.87px;font-weight:400;color:#333;transform:scaleX(1.064);-webkit-text-stroke:0.02px #333;">DataVol1</div>
<div class="t" style="left:173.90px;top:149.75px;font-size:6.88px;font-weight:400;color:#222;transform:scaleX(1.14);-webkit-text-stroke:0.25px #222;">準備完了</div>
<div class="t" style="left:110.49px;top:164.20px;font-size:6.98px;font-weight:400;color:#555;transform:scaleX(1.029);-webkit-text-stroke:0.15px #555;">スナップショットソース：</div>
<div class="t" style="left:211.56px;top:165.05px;font-size:6.59px;font-weight:700;color:#333;transform:scaleX(1.039);">ローカル</div>
<div class="t" style="left:254.23px;top:164.10px;font-size:7.72px;font-weight:400;color:#333;transform:scaleX(0.937);-webkit-text-stroke:0.08px #333;">NAS626A4D</div>
<div class="t" style="left:205.60px;top:179.85px;font-size:7.73px;font-weight:400;color:#666;transform:scaleX(0.909);-webkit-text-stroke:0.15px #666;">保存ポリシー：</div>
<div class="t" style="left:259.95px;top:179.90px;font-size:7.62px;font-weight:400;color:#3a4f80;transform:scaleX(0.91);-webkit-text-stroke:0.15px #3a4f80;">スマートバージョン管理</div>
<div class="t" style="left:359.58px;top:179.25px;font-size:8.65px;font-weight:400;color:#666;transform:scaleX(0.826);-webkit-text-stroke:0.15px #666;">スケジュール：</div>
<div class="t" style="left:415.31px;top:179.75px;font-size:7.68px;font-weight:400;color:#3a4f80;transform:scaleX(0.917);-webkit-text-stroke:0.15px #3a4f80;">スケジュールなし</div>
<div class="t" style="left:387.10px;top:149.15px;font-size:8.57px;font-weight:400;color:#333;transform:scaleX(0.936);-webkit-text-stroke:0.15px #333;">スナップショットのスケジュ...</div>
<div class="t" style="left:551.60px;top:149.55px;font-size:7.32px;font-weight:400;color:#333;transform:scaleX(1.201);-webkit-text-stroke:0.15px #333;">スナップショットを撮る</div>
<div class="t" style="left:498.64px;top:201.05px;font-size:7.05px;font-weight:400;color:#444;transform:scaleX(1.039);-webkit-text-stroke:0.15px #444;">サイズを計算</div>
<div class="t" style="left:583.22px;top:201.10px;font-size:7.1px;font-weight:400;color:#2338a8;transform:scaleX(0.965);text-decoration:underline;-webkit-text-stroke:0.15px #2338a8;">File Station で開く</div>
<div class="t" style="left:109.83px;top:224.05px;font-size:6.72px;font-weight:400;color:#4d5d78;transform:scaleX(1.065);-webkit-text-stroke:0.15px #4d5d78;">合計: 1/256</div>
<div class="t" style="left:89.36px;top:246.65px;font-size:7.65px;font-weight:400;color:#667;transform:scaleX(0.99);-webkit-text-stroke:0.08px #667;">:1</div>
<div class="t" style="left:164.76px;top:253.00px;font-size:8.35px;font-weight:700;color:#fff;transform:scaleX(0.943);">2025/09/30</div>
<div class="t" style="left:129.15px;top:268.10px;font-size:7.79px;font-weight:400;color:#3b7dd8;transform:scaleX(0.998);-webkit-text-stroke:0.08px #3b7dd8;">GMT+09_2025-09-30_1457</div>
<div class="t" style="left:226.00px;top:268.75px;font-size:7px;font-weight:400;color:#9bb;transform:scaleX(1);-webkit-text-stroke:0.08px #9bb;">...</div>
<div class="t" style="left:49.67px;top:279.70px;font-size:7.52px;font-weight:400;color:#666;transform:scaleX(0.926);-webkit-text-stroke:0.08px #666;">09/27</div>
<div class="t" style="left:49.67px;top:315.70px;font-size:7.52px;font-weight:400;color:#666;transform:scaleX(0.926);-webkit-text-stroke:0.08px #666;">09/24</div>
<div class="t" style="left:49.67px;top:351.70px;font-size:7.52px;font-weight:400;color:#666;transform:scaleX(0.926);-webkit-text-stroke:0.08px #666;">09/21</div>
<div class="t" style="left:49.67px;top:387.70px;font-size:7.52px;font-weight:400;color:#666;transform:scaleX(0.926);-webkit-text-stroke:0.08px #666;">09/18</div>
<div class="t" style="left:49.67px;top:423.70px;font-size:7.52px;font-weight:400;color:#666;transform:scaleX(0.926);-webkit-text-stroke:0.08px #666;">09/15</div>
<div class="t" style="left:283.58px;top:252.60px;font-size:8.57px;font-weight:400;color:#333;transform:scaleX(0.832);-webkit-text-stroke:0.08px #333;">GMT+09_2025-09-30_1457</div>
<div class="t" style="left:303.68px;top:275.50px;font-size:8.28px;font-weight:400;color:#444;transform:scaleX(0.956);-webkit-text-stroke:0.08px #444;">.@analytic</div>
<div class="t" style="left:303.68px;top:292.25px;font-size:8.28px;font-weight:400;color:#444;transform:scaleX(0.956);-webkit-text-stroke:0.08px #444;">.@app_center</div>
<div class="t" style="left:303.68px;top:309.00px;font-size:8.28px;font-weight:400;color:#444;transform:scaleX(0.956);-webkit-text-stroke:0.08px #444;">.@backup_code_signing</div>
<div class="t" style="left:303.68px;top:325.75px;font-size:8.28px;font-weight:400;color:#444;transform:scaleX(0.956);-webkit-text-stroke:0.08px #444;">.@backup_config</div>
<div class="t" style="left:303.68px;top:342.50px;font-size:8.28px;font-weight:400;color:#444;transform:scaleX(0.956);-webkit-text-stroke:0.08px #444;">.@qmonitor</div>
<div class="t" style="left:303.68px;top:359.25px;font-size:8.28px;font-weight:400;color:#444;transform:scaleX(0.956);-webkit-text-stroke:0.08px #444;">.@qsync</div>
<div class="t" style="left:303.68px;top:376.00px;font-size:8.28px;font-weight:400;color:#444;transform:scaleX(0.956);-webkit-text-stroke:0.08px #444;">.@upload_cache</div>
<div class="t" style="left:303.68px;top:392.75px;font-size:8.28px;font-weight:400;color:#444;transform:scaleX(0.956);-webkit-text-stroke:0.08px #444;">.@wfm</div>
<div class="t" style="left:303.68px;top:409.50px;font-size:8.28px;font-weight:400;color:#444;transform:scaleX(0.956);-webkit-text-stroke:0.08px #444;">.antivirus</div>
<div class="t" style="left:316.30px;top:431.90px;font-size:7.14px;font-weight:400;color:#4a90c8;transform:scaleX(0.8);-webkit-text-stroke:0.08px #4a90c8;">1</div>
<div class="t" style="left:341.00px;top:431.90px;font-size:7.02px;font-weight:400;color:#555;transform:scaleX(0.873);-webkit-text-stroke:0.15px #555;">/1</div>
<div class="t" style="left:403.16px;top:432.45px;font-size:7px;font-weight:400;color:#555;transform:scaleX(0.95);-webkit-text-stroke:0.15px #555;">表示</div>
<div class="t" style="left:426.27px;top:431.00px;font-size:7.22px;font-weight:400;color:#4a90c8;transform:scaleX(0.907);-webkit-text-stroke:0.08px #4a90c8;">50</div>
<div class="t" style="left:452.77px;top:433.00px;font-size:6.71px;font-weight:400;color:#555;transform:scaleX(0.97);-webkit-text-stroke:0.15px #555;">アイテム</div>
<div class="t" style="left:526.00px;top:231.20px;font-size:7.8px;font-weight:400;color:#666;transform:scaleX(1);-webkit-text-stroke:0.15px #666;">撮影済</div>
<div class="t" style="left:525.75px;top:241.25px;font-size:7.8px;font-weight:400;color:#666;transform:scaleX(1);-webkit-text-stroke:0.15px #666;">み：</div>
<div class="t" style="left:569.44px;top:235.80px;font-size:8.5px;font-weight:400;color:#444;transform:scaleX(0.924);-webkit-text-stroke:0.08px #444;">2025-09-30 15:01:32</div>
<div class="t" style="left:525.75px;top:253.15px;font-size:7.8px;font-weight:400;color:#666;transform:scaleX(1);-webkit-text-stroke:0.15px #666;">複製済</div>
<div class="t" style="left:525.75px;top:263.80px;font-size:7.8px;font-weight:400;color:#666;transform:scaleX(1);-webkit-text-stroke:0.15px #666;">み：</div>
<div class="t" style="left:569.25px;top:258.45px;font-size:7.7px;font-weight:400;color:#444;transform:scaleX(1);-webkit-text-stroke:0.15px #444;">いいえ</div>
<div class="t" style="left:526.00px;top:277.98px;font-size:7.8px;font-weight:400;color:#666;transform:scaleX(1);-webkit-text-stroke:0.15px #666;">保存ポリ</div>
<div class="t" style="left:525.00px;top:288.60px;font-size:7.8px;font-weight:400;color:#666;transform:scaleX(1);-webkit-text-stroke:0.15px #666;">シー：</div>
<div class="t" style="left:569.25px;top:277.45px;font-size:7.7px;font-weight:400;color:#2a3cc4;transform:scaleX(1);text-decoration:underline;-webkit-text-stroke:0.15px #2a3cc4;">スマートバージョン</div>
<div class="t" style="left:569.75px;top:287.85px;font-size:7.7px;font-weight:400;color:#2a3cc4;transform:scaleX(1);text-decoration:underline;-webkit-text-stroke:0.15px #2a3cc4;">管理 (無期限)</div>
<div class="t" style="left:525.25px;top:325.67px;font-size:7.8px;font-weight:400;color:#666;transform:scaleX(1);-webkit-text-stroke:0.15px #666;">ステータ</div>
<div class="t" style="left:525.25px;top:336.52px;font-size:7.8px;font-weight:400;color:#666;transform:scaleX(1);-webkit-text-stroke:0.15px #666;">ス：</div>
<div class="t" style="left:589.00px;top:331.05px;font-size:7.7px;font-weight:400;color:#4caf50;transform:scaleX(1);-webkit-text-stroke:0.15px #4caf50;">準備完了</div>
<div class="t" style="left:525.75px;top:352.75px;font-size:7.8px;font-weight:400;color:#666;transform:scaleX(1);-webkit-text-stroke:0.15px #666;">容量：</div>
<div class="t" style="left:569.58px;top:352.10px;font-size:9.36px;font-weight:400;color:#444;transform:scaleX(0.846);-webkit-text-stroke:0.08px #444;">565.36 GB</div>
<div class="t" style="left:526.00px;top:390.92px;font-size:6.6px;font-weight:400;color:#666;transform:scaleX(1.0);-webkit-text-stroke:0.15px #666;">説明:</div>
<div class="t" style="left:532.50px;top:404.70px;font-size:7.03px;font-weight:400;color:#333;transform:scaleX(1.0);-webkit-text-stroke:0.15px #333;">テスト001</div>
<div class="t" style="left:320.00px;top:475.65px;font-size:8.55px;font-weight:400;color:#fff;transform:scaleX(0.994);-webkit-text-stroke:0.1px #fff;">復元</div>
<div class="t" style="left:403.03px;top:475.80px;font-size:8.77px;font-weight:400;color:#fff;transform:scaleX(0.974);-webkit-text-stroke:0.1px #fff;">クローン</div>
<div class="t" style="left:487.60px;top:476.15px;font-size:7.48px;font-weight:400;color:#fff;transform:scaleX(1.2);-webkit-text-stroke:0.1px #fff;">ボリュームスナップショットを元に戻す</div>
</body></html>
